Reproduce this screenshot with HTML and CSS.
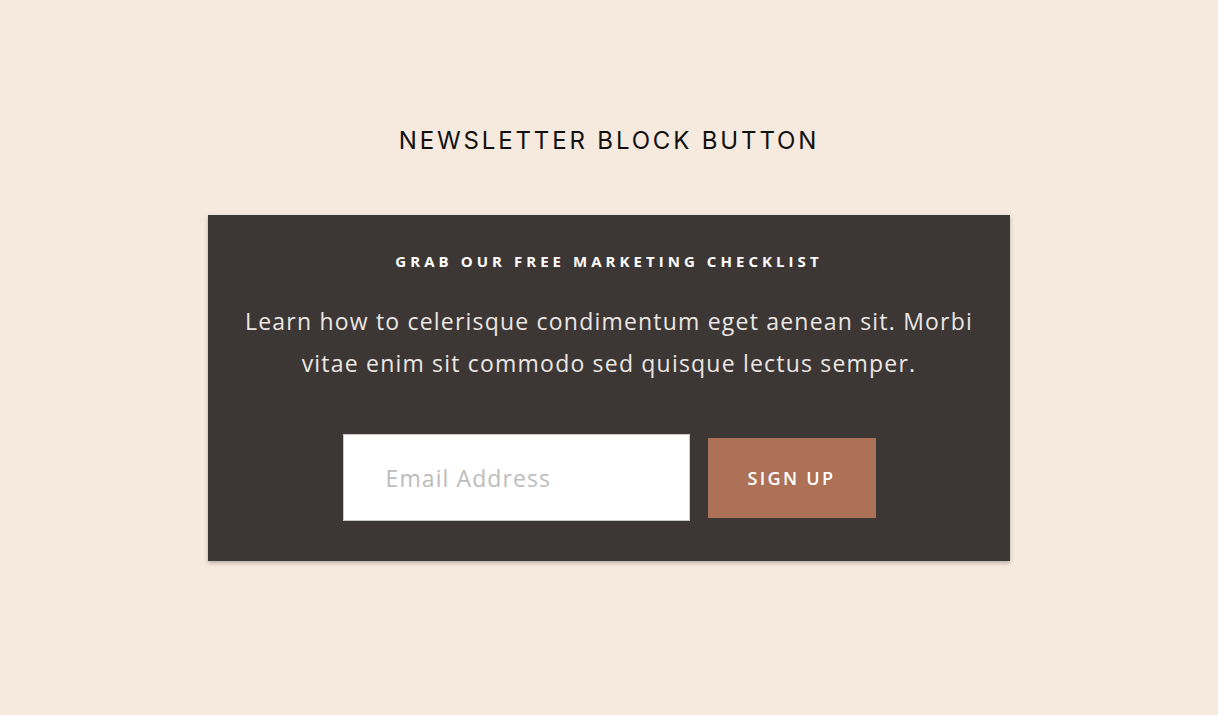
FILE: index.html
```html
<!DOCTYPE html>
<html lang="en">
<head>
    <meta charset="UTF-8">
    <meta name="viewport" content="width=device-width, initial-scale=1.0">
    <title>Newsletter Block Button</title>
    <link rel="stylesheet" href="styles.css">
</head>
<body>
    <div class="page">
        <h1 class="page-title">Newsletter Block Button</h1>

        <!-- Блок подписки -->
        <div class="newsletter">
            <h2 class="newsletter-heading">Grab our free marketing checklist</h2>
            <p class="newsletter-text">Learn how to celerisque condimentum eget aenean sit. Morbi vitae enim sit commodo sed quisque lectus semper.</p>

            <form class="newsletter-form">
                <input type="email" class="email-input" placeholder="Email Address">
                <button type="button" class="btn-signup">Sign Up</button>
            </form>
        </div>
    </div>
</body>
</html>
```

FILE: styles.css
```css
* {
    margin: 0;
    padding: 0;
    box-sizing: border-box;
}
body {
    font-family: 'Open Sans', 'Lato', sans-serif;
    background: #f6e9de;
    min-height: 100vh;
}
.page {
    display: flex;
    flex-direction: column;
    align-items: center;
    padding-top: 126px;
}
.page-title {
    font-family: 'Inter', 'Roboto', sans-serif;
    font-weight: 400;
    font-size: 24px;
    line-height: 30px;
    letter-spacing: 2.85px;
    text-transform: uppercase;
    color: #111;
    margin-bottom: 59px;
}
.newsletter {
    width: 802px;
    background: #3c3735;
    box-shadow: 0 2px 4px rgba(0, 0, 0, 0.25);
    padding: 36px 30px 40px;
    text-align: center;
}
.newsletter-heading {
    font-weight: 700;
    font-size: 15px;
    line-height: 20px;
    letter-spacing: 4.05px;
    text-transform: uppercase;
    color: #fff;
    margin-bottom: 29px;
}
.newsletter-text {
    font-weight: 400;
    font-size: 23px;
    line-height: 42px;
    letter-spacing: 1.2px;
    color: #ebe6e3;
    max-width: 745px;
    margin: 0 auto 50px;
}
.newsletter-form {
    display: flex;
    justify-content: center;
    align-items: center;
    gap: 18px;
}
.email-input {
    width: 347px;
    height: 87px;
    background: #fff;
    border: 1px solid #c9c9c9;
    padding: 0 40px 0 42px;
    font-family: 'Open Sans', sans-serif;
    font-weight: 400;
    font-size: 23px;
    letter-spacing: 1.1px;
    color: #333;
    outline: none;
}
.email-input::placeholder {
    color: #bcbcbc;
}
.btn-signup {
    width: 168px;
    height: 80px;
    background: #ad7158;
    border: none;
    color: #fff;
    font-family: 'Open Sans', sans-serif;
    font-weight: 600;
    font-size: 18px;
    letter-spacing: 2.3px;
    text-transform: uppercase;
    cursor: pointer;
}
```
